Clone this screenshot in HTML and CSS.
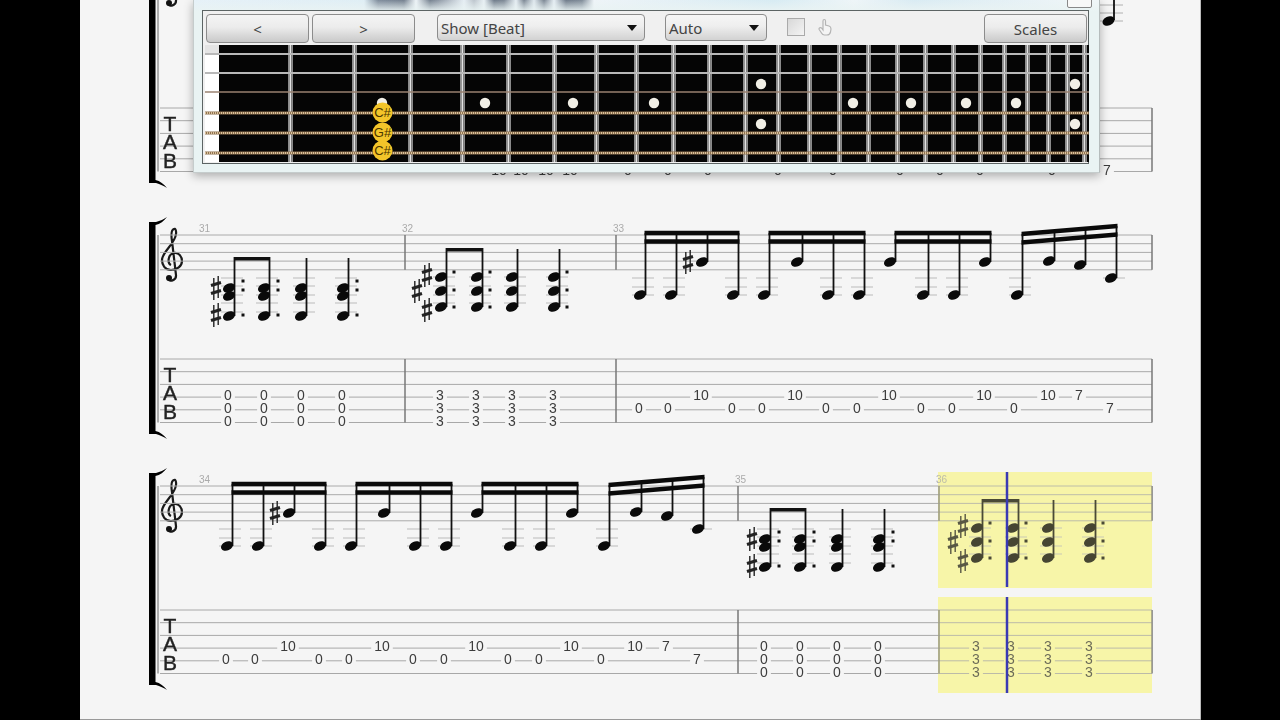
FILE: index.html
```html
<!DOCTYPE html>
<html lang="en">
<head>
    <meta charset="UTF-8">
    <meta name="viewport" content="width=device-width, initial-scale=1.0">
    <title>Guitar Tab</title>
    <link rel="stylesheet" href="styles.css">
</head>
<body>
    <div class="screen">
        <div class="page">
            <svg class="score" id="score" width="1121" height="719" viewBox="80 0 1121 719"></svg>

            <div class="fret_window">
                <div class="close_box"></div>
                <div class="fret_panel">
                    <div class="toolbar">
                        <button class="tool_button" type="button">&lt;</button>
                        <button class="tool_button" type="button">&gt;</button>
                        <div class="drop show_drop"><span>Show [Beat]</span><i class="drop_arrow"></i></div>
                        <div class="drop auto_drop"><span>Auto</span><i class="drop_arrow"></i></div>
                        <div class="check"></div>
                        <svg class="hand" width="14" height="18" viewBox="0 0 14 18">
                            <path d="M5 9V3C5 1 7.5 1 7.5 3V7L11 8C12.5 8.5 13 9.500 13 11L12.500 14C12 16 11 17 9 17H6.500C5 17 4 16 3.500 15L1.200 11.500C0.500 10 2.500 9 3.500 10L5 12Z"/>
                        </svg>
                        <button class="tool_button scales" type="button">Scales</button>
                    </div>
                    <svg class="board" id="board" width="884" height="117" viewBox="205 45 884 117"></svg>
                </div>
            </div>
        </div>
    </div>
    <script src="script.js"></script>
</body>
</html>
```

FILE: styles.css
```css
body {
    margin: 0;
    background-color: #000;
    overflow: hidden;
}
.screen {
    display: flex;
    height: 720px;
    padding-left: 80px;
    box-sizing: border-box;
}
.page {
    position: relative;
    width: 1121px;
    height: 720px;
    box-sizing: border-box;
    background-color: #f5f5f5;
    border-bottom: 1px solid #999;
    box-shadow: inset -1px 0 0 #bbb;
    overflow: hidden;
}
.score {
    display: block;
    filter: blur(0.35px);
}
.score text {
    font-family: "Liberation Sans", Arial, sans-serif;
}

/* fretboard popup */
.fret_window {
    position: absolute;
    top: 0;
    left: 113px;
    width: 907px;
    height: 173px;
    box-sizing: border-box;
    padding: 10px 10px 8px 8px;
    border-right: 1px solid #b5bcbc;
    border-bottom: 1px solid #c5cccc;
    border-left: 1px solid #c5cccc;
    background-color: #e9f3f3;
    background-image:
        linear-gradient(180deg, rgba(233, 243, 243, 0) 0, rgba(233, 243, 243, 0.85) 10px, #e9f3f3 11px),
        linear-gradient(90deg, #e6f1f8 0, #dfeef5 170px, #7f8c9c 184px, #74808f 210px, #eef4f8 222px, #75818f 236px, #8d97a4 244px, #e6eef4 270px, #bcc4cc 280px, #e8f0f4 290px, #6f7b8a 300px, #7c8794 310px, #e6eef4 322px, #7a8592 330px, #dfe8ee 340px, #7a8592 350px, #e6eef4 360px, #6f7b8a 372px, #7f8b98 388px, #eef4f8 400px, #d7ebf3 580px, #eef5f8 660px, #d9ebf3 720px, #f0f6f8 900px);
    box-shadow: 0 3px 9px rgba(0, 0, 0, 0.3);
}
.close_box {
    position: absolute;
    top: -2px;
    right: 7px;
    width: 23px;
    height: 8px;
    background-color: #f8f8f8;
    border: 1px solid #888;
    border-radius: 2px;
}
.fret_panel {
    height: 154px;
    box-sizing: border-box;
    padding: 3px 0 0 2px;
    background-color: #f0f0f0;
    border: 1px solid #5c6464;
}
.toolbar {
    display: flex;
    align-items: flex-start;
    height: 31px;
    padding-left: 1px;
    font-family: "Noto Sans", "DejaVu Sans", sans-serif;
    font-size: 15px;
    color: #444;
}
.tool_button {
    width: 103px;
    height: 29px;
    margin: 0 3px 0 0;
    padding: 0;
    border: 1.5px solid #8c8c8c;
    border-radius: 4px;
    background: linear-gradient(180deg, #f4f4f4 0, #ececec 45%, #c9c9c9 100%);
    font-family: inherit;
    font-size: 15px;
    color: #444;
}
.scales {
    margin-left: auto;
    margin-right: 1px;
}
.drop {
    display: flex;
    align-items: center;
    justify-content: space-between;
    height: 27px;
    box-sizing: border-box;
    padding: 0 7px 0 3px;
    border: 1.5px solid #8c8c8c;
    border-radius: 4px;
    background: linear-gradient(180deg, #f6f6f6 0, #eee 45%, #d2d2d2 100%);
}
.show_drop {
    width: 208px;
    margin-left: 19px;
}
.auto_drop {
    width: 102px;
    margin-left: 20px;
}
.drop_arrow {
    width: 0;
    height: 0;
    border-style: solid;
    border-width: 6px 5px 0 5px;
    border-color: #111 transparent transparent transparent;
}
.check {
    width: 18px;
    height: 18px;
    box-sizing: border-box;
    margin: 4px 0 0 20px;
    border: 1.5px solid #aaa;
    background: linear-gradient(135deg, #d8d8d8 0, #f4f4f4 100%);
}
.hand {
    margin: 4px 0 0 13px;
    fill: #f4f4f4;
    stroke: #b4b4b4;
    stroke-width: 1.2;
}
.board {
    display: block;
}
.board text {
    font-family: "Liberation Sans", Arial, sans-serif;
    font-size: 13px;
    fill: #4a3600;
}
```

FILE: script.js
```js
const STAFF_GAP = 8.7;
const TAB_GAP = 12.7;
const YELLOW = "#f7f5a8";
const PAGE_BG = "#f5f5f5";
let out = "";

function line(x1, y1, x2, y2, color, width) {
    out += `<line x1="${x1}" y1="${y1}" x2="${x2}" y2="${y2}" stroke="${color}" stroke-width="${width}"/>`;
}
function rect(x, y, w, h, color) {
    out += `<rect x="${x}" y="${y}" width="${w}" height="${h}" fill="${color}"/>`;
}
function head(x, y) {
    out += `<ellipse cx="${x}" cy="${y}" rx="6.300" ry="4.500" fill="#0a0a0a" transform="rotate(-24 ${x} ${y})"/>`;
}
function sharp(x, y) {
    line(x - 2.2, y - 10, x - 2.2, y + 12, "#222", 1.4);
    line(x + 2.2, y - 12, x + 2.2, y + 10, "#222", 1.4);
    line(x - 5, y - 2.5, x + 5, y - 5.5, "#222", 3.2);
    line(x - 5, y + 5.5, x + 5, y + 2.5, "#222", 3.2);
}
function ledgers(x, top, list) {
    list.forEach(r => line(x - 8, top + r, x + 14, top + r, "#bbb", 1));
}
function bar(x, top, tabTop) {
    line(x, top, x, top + STAFF_GAP * 4, "#777", 1.5);
    line(x, tabTop, x, tabTop + TAB_GAP * 5, "#777", 1.5);
}
function barNumber(x, y, n) {
    out += `<text x="${x}" y="${y}" font-size="10" fill="#aaa">${n}</text>`;
}
// number on a tab line, string 0 is the top one
function num(x, tabTop, string, text, bg) {
    const y = tabTop + string * TAB_GAP;
    const w = text.length * 7.8 + 6;
    rect(x - w / 2, y - 4.5, w, 9, bg || PAGE_BG);
    out += `<text x="${x}" y="${y + 4}" font-size="14" fill="#3c3c3c" text-anchor="middle">${text}</text>`;
}

function staffLines(top, x0) {
    for (let i = 0; i < 5; i++) line(x0, top + i * STAFF_GAP, 1152, top + i * STAFF_GAP, "#aaa", 1);
}
function tabLines(tabTop) {
    for (let i = 0; i < 6; i++) line(160, tabTop + i * TAB_GAP, 1152, tabTop + i * TAB_GAP, "#a8a8a8", 1);
    [[381.7, "T"], [400.2, "A"], [419, "B"]].forEach(t => {
        out += `<text x="170" y="${t[0] - 359 + tabTop}" font-size="21" fill="#222" stroke="#222" stroke-width="0.4" text-anchor="middle">${t[1]}</text>`;
    });
}
function bracket(top, bottom) {
    out += `<path fill="#000" d="M149 ${top}H156C160 ${top - 1} 164 ${top - 3} 167 ${top - 5}C164 ${top - 1} 160 ${top + 2} 155.500 ${top + 3}V${bottom - 3}C160 ${bottom - 2} 164 ${bottom + 1} 167 ${bottom + 5}C164 ${bottom + 3} 160 ${bottom + 1} 156 ${bottom}H149Z"/>`;
}
function clef(top) {
    out += `<g transform="translate(172 ${top})">`;
    out += `<path fill="none" stroke="#1a1a1a" stroke-width="2.200" d="M-1 30C-5 28 -4 19 2 18C7 17 10 22 10 26C10 31 5 35 -1 35C-7 35 -10 30 -10 25C-10 17 3 9 4 -1C4.500 -5 3 -7 2 -6C-1 -5 -1 0 0 6L4 40C4.500 46 -3 47 -4 44"/>`;
    out += `<circle cx="-3" cy="43" r="3" fill="#111"/></g>`;
}

// chord bar with two beamed chords and two quarter chords
function chordBar(xs, top, shape) {
    xs.forEach((x, i) => {
        ledgers(x, top, shape.ledgers);
        const low = shape.notes[shape.notes.length - 1];
        line(x + 5.5, top + shape.stemTop + (i > 1 ? 1 : 0), x + 5.5, top + low, "#111", 1.8);
        shape.notes.forEach(n => head(x, top + n));
        if (i !== 2) shape.dots.forEach(d => rect(x + shape.dotX - 1.5, top + d - 1.5, 3, 3, "#111"));
    });
    rect(xs[0] + 5, top + shape.stemTop, xs[1] - xs[0] + 1, 3.5, "#111");
    shape.sharps.forEach(s => sharp(xs[0] + s[0], top + s[1]));
}
const CHORD_A = {
    notes: [53, 61, 81], dots: [46, 55, 80], dotX: 14, stemTop: 22,
    ledgers: [43, 51, 60, 68, 77], sharps: [[-13, 53], [-13, 80]]
};
const CHORD_B = {
    notes: [42, 56, 72], dots: [37, 55, 72], dotX: 13, stemTop: 13,
    ledgers: [42, 51, 60, 68], sharps: [[-24, 56], [-14, 40], [-14, 75]]
};
function chordTab(xs, tabTop, text, bg) {
    xs.forEach(x => [3, 4, 5].forEach(s => num(x, tabTop, s, text, bg)));
}

// four sixteenths under a double beam, notes are [x, height below staff top]
function beamGroup(notes, top, y1, y2) {
    const x1 = notes[0][0] + 5.5;
    const x2 = notes[3][0] + 5.5;
    const at = x => y1 + (y2 - y1) * (x - x1) / (x2 - x1);
    notes.forEach(n => {
        if (n[1] > 50) ledgers(n[0], top, [43, 52, 60]);
        else if (n[1] > 40) ledgers(n[0], top, [43]);
    });
    notes.forEach(n => {
        line(n[0] + 5.5, top + at(n[0] + 5.5), n[0] + 5.5, top + n[1], "#111", 1.8);
        head(n[0], top + n[1]);
    });
    [0, 8.5].forEach(d => {
        out += `<path fill="#0a0a0a" d="M${x1 - 1} ${top + y1 + d - 2.200}L${x2 + 1} ${top + y2 + d - 2.200}V${top + y2 + d + 2.200}L${x1 - 1} ${top + y1 + d + 2.200}Z"/>`;
    });
}
// repeated riff of bars 33 and 34, dx moves it along the line
function riff(dx, top, tabTop) {
    const n = list => list.map(p => [p[0] - dx, p[1]]);
    beamGroup(n([[640, 60], [671, 60], [702, 27], [733, 60]]), top, -2, -2);
    sharp(688 - dx, top + 27);
    beamGroup(n([[764, 60], [797, 27], [828, 60], [859, 60]]), top, -2, -2);
    beamGroup(n([[890, 27], [923, 60], [954, 60], [985, 27]]), top, -2, -2);
    beamGroup(n([[1017, 60], [1049, 26], [1080, 30], [1111, 43]]), top, -1, -9);
    [[639, 4, "0"], [668, 4, "0"], [701, 3, "10"], [732, 4, "0"], [762, 4, "0"], [795, 3, "10"],
     [826, 4, "0"], [857, 4, "0"], [889, 3, "10"], [921, 4, "0"], [952, 4, "0"], [984, 3, "10"],
     [1014, 4, "0"], [1048, 3, "10"], [1079, 3, "7"], [1110, 4, "7"]
    ].forEach(p => num(p[0] - dx, tabTop, p[1], p[2]));
}

function drawScore() {
    // highlighted bar goes under everything else
    rect(938, 472, 214, 116, YELLOW);
    rect(938, 597, 214, 96, YELLOW);

    // line cut off by the top of the window
    bracket(-29, 183);
    clef(-40);
    tabLines(108);
    line(158, 0, 158, 171.500, "#666", 1);
    line(1152, 108, 1152, 171.500, "#777", 1.5);
    [5, 13, 21].forEach(y => line(1100, y, 1123, y, "#b0b0b0", 1));
    line(1114, 0, 1114, 20, "#111", 1.8);
    head(1108.500, 21);
    [[499, "10"], [521, "10"], [546, "10"], [570, "10"], [628, "0"], [668, "0"], [708, "0"], [778, "0"],
     [833, "0"], [900, "0"], [940, "0"], [980, "0"], [1052, "0"], [1107, "7"]
    ].forEach(p => num(p[0], 107, 5, p[1]));

    // bars 31 - 33
    bracket(222, 434);
    clef(235);
    staffLines(235, 160);
    tabLines(359);
    line(158, 235, 158, 422.5, "#666", 1);
    bar(405, 235, 359);
    bar(616, 235, 359);
    bar(1152, 235, 359);
    barNumber(199, 232, 31);
    barNumber(402, 232, 32);
    barNumber(613, 232, 33);
    chordBar([229, 264, 301, 343], 235, CHORD_A);
    chordTab([228, 264, 301, 342], 358, "0");
    chordBar([441, 477, 512, 554], 235, CHORD_B);
    chordTab([440, 476, 512, 553], 358, "3");
    riff(0, 235, 358);

    // bars 34 - 36
    bracket(473, 685);
    clef(486);
    staffLines(486, 160);
    tabLines(610);
    line(158, 486, 158, 673.5, "#666", 1);
    bar(738, 486, 610);
    bar(939, 486, 610);
    bar(1152, 486, 610);
    barNumber(199, 483, 34);
    barNumber(735, 483, 35);
    barNumber(936, 483, 36);
    riff(413, 486, 609);
    chordBar([765, 800, 837, 879], 486, CHORD_A);
    chordTab([764, 800, 837, 878], 609, "0");
    chordBar([977, 1013, 1048, 1090], 486, CHORD_B);
    chordTab([976, 1011, 1048, 1089], 609, "3", YELLOW);

    // start of the next line, only its tip shows
    bracket(724, 900);

    // yellow tint over the notes of the bar, then the play cursor
    out += `<g opacity="0.25">`;
    rect(938, 472, 214, 116, YELLOW);
    rect(938, 597, 214, 96, YELLOW);
    out += `</g>`;
    line(1007, 472, 1007, 587, "#3a3ab4", 2.5);
    line(1007, 597, 1007, 693, "#3a3ab4", 2.5);

    document.getElementById("score").innerHTML = out;
}

function drawBoard() {
    const frets = [290, 354, 410, 462, 508, 554, 596, 636, 673, 709, 745, 778, 809, 839, 868, 897, 925, 953, 980, 1004, 1027, 1048, 1067, 1084];
    const strings = [54, 73, 92, 113, 133, 153];
    out = "";
    rect(205, 45, 884, 117, "#fff");
    rect(219, 45, 870, 117, "#050505");
    rect(205, 45, 14, 8, "#e4e4e4");

    frets.forEach(x => {
        rect(x - 2, 45, 1.5, 117, "#8c8c8c");
        rect(x - 0.5, 45, 2, 117, "#e2e2e2");
        rect(x + 1.5, 45, 1.5, 117, "#8a8a8a");
    });

    [485, 573, 654, 853, 911, 966, 1016, 382].forEach(x => {
        out += `<circle cx="${x}" cy="103" r="5.200" fill="#f1efe6"/>`;
    });
    [761, 1075].forEach(x => {
        [84, 124].forEach(y => { out += `<circle cx="${x}" cy="${y}" r="5.200" fill="#f1efe6"/>`; });
    });

    line(205, strings[0], 1089, strings[0], "#b8b8b8", 2);
    line(205, strings[1], 1089, strings[1], "#b8b8b8", 2);
    line(205, strings[2], 1089, strings[2], "#9a8270", 1.5);
    [3, 4, 5].forEach(i => {
        line(205, strings[i], 1089, strings[i], "#8f7250", 3);
        out += `<line x1="205" y1="${strings[i]}" x2="1089" y2="${strings[i]}" stroke="#d8c09a" stroke-width="2" stroke-dasharray="1 1"/>`;
    });

    [[112.500, "C#"], [132.500, "G#"], [150.500, "C#"]].forEach(p => {
        out += `<circle cx="382.500" cy="${p[0]}" r="10" fill="#f3c52a"/>`;
    });
    [[112.500, "C#"], [132.500, "G#"], [150.500, "C#"]].forEach(p => {
        out += `<text x="382.500" y="${p[0] + 4.500}" text-anchor="middle">${p[1]}</text>`;
    });
    document.getElementById("board").innerHTML = out;
}

drawScore();
drawBoard();
```
